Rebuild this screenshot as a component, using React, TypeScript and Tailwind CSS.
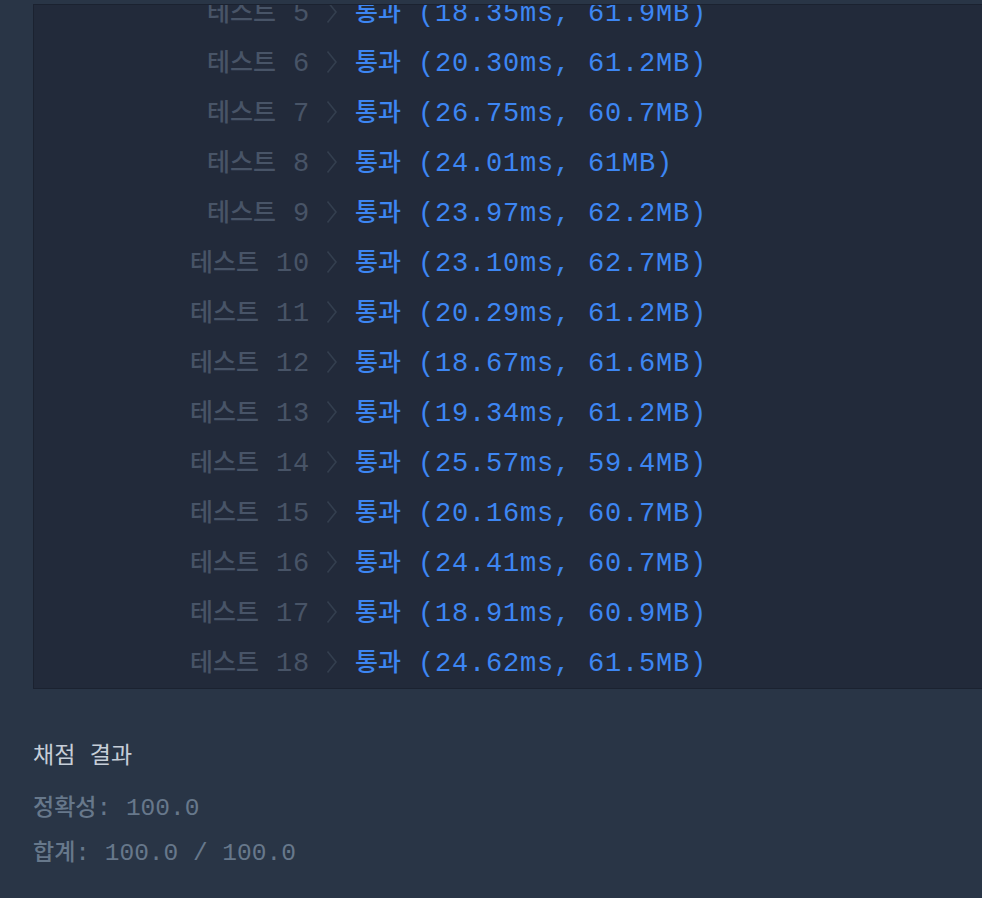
const mono = '"Liberation Mono", "Noto Sans CJK KR", monospace';
const kr = '"Noto Sans CJK KR", "Noto Sans", sans-serif';

const results: [number, string, string][] = [
  [5, '18.35ms', '61.9MB'],
  [6, '20.30ms', '61.2MB'],
  [7, '26.75ms', '60.7MB'],
  [8, '24.01ms', '61MB'],
  [9, '23.97ms', '62.2MB'],
  [10, '23.10ms', '62.7MB'],
  [11, '20.29ms', '61.2MB'],
  [12, '18.67ms', '61.6MB'],
  [13, '19.34ms', '61.2MB'],
  [14, '25.57ms', '59.4MB'],
  [15, '20.16ms', '60.7MB'],
  [16, '24.41ms', '60.7MB'],
  [17, '18.91ms', '60.9MB'],
  [18, '24.62ms', '61.5MB'],
];

function Chevron() {
  return (
    <svg width="12" height="24" viewBox="0 0 12 24" className="shrink-0">
      <polyline points="1.5,1.5 10,12 1.5,22.5" fill="none" stroke="#343f4f" strokeWidth="1.6" />
    </svg>
  );
}

function ResultRow({ n, time, mem }: { n: number; time: string; mem: string }) {
  return (
    <div className="flex h-[50px] items-center whitespace-pre">
      <div className="flex w-[276px] shrink-0 items-baseline justify-end text-[#485467]">
        <span className="text-[25px] font-medium leading-[30px]" style={{ fontFamily: kr }}>테스트</span>
        <span className="text-[27px] leading-[30px] tracking-[0.8px]" style={{ fontFamily: mono }}>{' ' + n}</span>
      </div>
      <div className="ml-[16px] flex items-center">
        <Chevron />
      </div>
      <div className="ml-[17px] flex items-baseline text-[#3d86f3]">
        <span className="text-[25px] font-medium leading-[30px]" style={{ fontFamily: kr }}>통과</span>
        <span className="text-[27px] leading-[30px] tracking-[0.8px]" style={{ fontFamily: mono }}>
          {` (${time}, ${mem})`}
        </span>
      </div>
    </div>
  );
}

export default function App() {
  return (
    <div className="min-h-screen w-full overflow-hidden bg-[#293546] pt-[4px] pl-[33px]">
      <div className="h-[685px] overflow-hidden border border-r-0 border-[#1b2230] bg-[#222a3a]">
        <div className="-mt-[18px]">
          {results.map(( [n, time, mem] ) => (
            <ResultRow key={n} n={n} time={time} mem={mem} />
          ))}
        </div>
      </div>

      <div className="mt-[49px] whitespace-pre">
        <div className="flex h-[30px] items-baseline text-[#c6ced8]">
          <span className="text-[23px] leading-[30px]" style={{ fontFamily: kr }}>채점</span>
          <span className="text-[24px] leading-[30px]" style={{ fontFamily: mono }}> </span>
          <span className="text-[23px] leading-[30px]" style={{ fontFamily: kr }}>결과</span>
        </div>
        <div className="mt-[22px] flex h-[30px] items-baseline text-[#67788b]">
          <span className="text-[23px] font-medium leading-[30px]" style={{ fontFamily: kr }}>정확성</span>
          <span className="text-[24.5px] leading-[30px]" style={{ fontFamily: mono }}>: 100.0</span>
        </div>
        <div className="mt-[15px] flex h-[30px] items-baseline text-[#67788b]">
          <span className="text-[23px] font-medium leading-[30px]" style={{ fontFamily: kr }}>합계</span>
          <span className="text-[24.5px] leading-[30px]" style={{ fontFamily: mono }}>: 100.0 / 100.0</span>
        </div>
      </div>
    </div>
  );
}
